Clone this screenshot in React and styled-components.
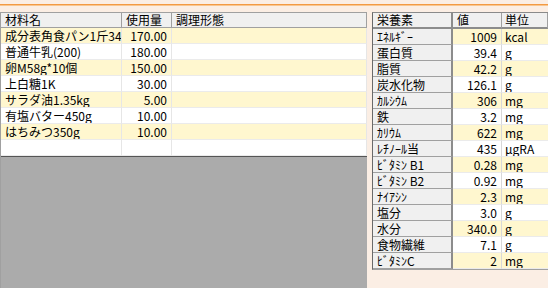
import React from "react";
import styled, { createGlobalStyle } from "styled-components";

const Global = createGlobalStyle`
  html, body { margin: 0; padding: 0; }
  body {
    background: #fbeee4;
    font-family: "Noto Sans CJK JP", "Noto Sans", sans-serif;
    font-size: 12px;
    color: #000;
    width: 548px;
    height: 288px;
    overflow: hidden;
  }
`;

const Page = styled.div`
  width: 548px;
  height: 288px;
  display: flex;
  flex-direction: column;
`;

const TopStrip = styled.div`
  height: 12px;
  padding-top: 4px;
  box-sizing: border-box;
`;

const OrangeLine = styled.div`
  height: 1px;
  background: #f39a42;
  border-bottom: 1px solid #f8c690;
`;

const Main = styled.div`
  flex: 1;
  display: flex;
  gap: 5px;
  min-height: 0;
`;

const LeftPane = styled.div`
  width: 367px;
  flex: none;
  background: #ababab;
  border-left: 1px solid #a0a0a0;
  box-sizing: border-box;
  display: flex;
  flex-direction: column;
`;

const LeftGrid = styled.div`
  display: grid;
  grid-template-columns: 121px 50px 1fr;
  border-top: 1px solid #a0a0a0;
  border-bottom: 1px solid #555;
  background: #fff;
`;

const HeadCell = styled.div`
  height: 14px;
  line-height: 14px;
  background: #f0f0f0;
  border-bottom: 1px solid #a0a0a0;
  border-right: 1px solid #a0a0a0;
  padding-left: 4px;
  white-space: nowrap;
`;

const DataCell = styled.div`
  height: 15px;
  line-height: 15px;
  background: ${(p) => (p.$yellow ? "#fff7cf" : "#ffffff")};
  border-bottom: 1px solid #ebebeb;
  border-right: 1px solid #e6e6e6;
  padding: ${(p) => (p.$right ? "0 4px 0 0" : "0 0 0 4px")};
  text-align: ${(p) => (p.$right ? "right" : "left")};
  white-space: nowrap;
  overflow: hidden;
  min-width: 0;
`;

const RightPane = styled.div`
  flex: 1;
  height: 258px;
  display: grid;
  grid-template-columns: 80px 49px 1fr;
  grid-auto-rows: min-content;
  border-top: 1px solid #8a8a8a;
  border-left: 1px solid #6a6a6a;
  border-bottom: 1px solid #a0a0a0;
  box-sizing: border-box;
  background: #fbeee4;
  align-content: start;
`;

const RHead = styled.div`
  height: 14px;
  line-height: 14px;
  background: #f0f0f0;
  border-bottom: 2px solid #8c8c8c;
  border-right: ${(p) => (p.$thick ? "2px solid #8c8c8c" : "1px solid #a0a0a0")};
  padding-left: ${(p) => p.$pad || 4}px;
  white-space: nowrap;
`;

const RName = styled.div`
  height: 15px;
  line-height: 15px;
  background: #f0f0f0;
  border-bottom: 1px solid #a0a0a0;
  border-right: 2px solid #8c8c8c;
  padding-left: 4px;
  white-space: nowrap;
  overflow: hidden;
`;

const RVal = styled.div`
  height: 15px;
  line-height: 15px;
  background: ${(p) => (p.$yellow ? "#fff7cf" : "#ffffff")};
  border-bottom: 1px solid #ebebeb;
  border-right: ${(p) => (p.$last ? "none" : "1px solid #d8d8d8")};
  padding: ${(p) => (p.$right ? "0 4px 0 0" : "0 0 0 3px")};
  text-align: ${(p) => (p.$right ? "right" : "left")};
  white-space: nowrap;
  overflow: hidden;
`;

const ingredients = [
  ["成分表角食パン1斤340g", "170.00"],
  ["普通牛乳(200)", "180.00"],
  ["卵M58g*10個", "150.00"],
  ["上白糖1K", "30.00"],
  ["サラダ油1.35kg", "5.00"],
  ["有塩バター450g", "10.00"],
  ["はちみつ350g", "10.00"],
  ["", ""],
];

const nutrients = [
  ["ｴﾈﾙｷﾞｰ", "1009", "kcal"],
  ["蛋白質", "39.4", "g"],
  ["脂質", "42.2", "g"],
  ["炭水化物", "126.1", "g"],
  ["ｶﾙｼｳﾑ", "306", "mg"],
  ["鉄", "3.2", "mg"],
  ["ｶﾘｳﾑ", "622", "mg"],
  ["ﾚﾁﾉｰﾙ当", "435", "μgRA"],
  ["ﾋﾞﾀﾐﾝ B1", "0.28", "mg"],
  ["ﾋﾞﾀﾐﾝ B2", "0.92", "mg"],
  ["ﾅｲｱｼﾝ", "2.3", "mg"],
  ["塩分", "3.0", "g"],
  ["水分", "340.0", "g"],
  ["食物繊維", "7.1", "g"],
  ["ﾋﾞﾀﾐﾝC", "2", "mg"],
];

export default function App() {
  return (
    <Page>
      <Global />
      <TopStrip>
        <OrangeLine />
      </TopStrip>
      <Main>
        <LeftPane>
          <LeftGrid>
            <HeadCell>材料名</HeadCell>
            <HeadCell>使用量</HeadCell>
            <HeadCell>調理形態</HeadCell>
            {ingredients.map(([name, qty], i) => (
              <React.Fragment key={i}>
                <DataCell $yellow={i % 2 === 0 && name !== ""}>{name}</DataCell>
                <DataCell $yellow={i % 2 === 0 && name !== ""} $right>
                  {qty}
                </DataCell>
                <DataCell $yellow={i % 2 === 0 && name !== ""} />
              </React.Fragment>
            ))}
          </LeftGrid>
        </LeftPane>
        <RightPane>
          <RHead $thick>栄養素</RHead>
          <RHead>値</RHead>
          <RHead $pad={3}>単位</RHead>
          {nutrients.map(([n, v, u], i) => (
            <React.Fragment key={n}>
              <RName>{n}</RName>
              <RVal $yellow={i % 2 === 0} $right>
                {v}
              </RVal>
              <RVal $yellow={i % 2 === 0} $last>
                {u}
              </RVal>
            </React.Fragment>
          ))}
        </RightPane>
      </Main>
    </Page>
  );
}
